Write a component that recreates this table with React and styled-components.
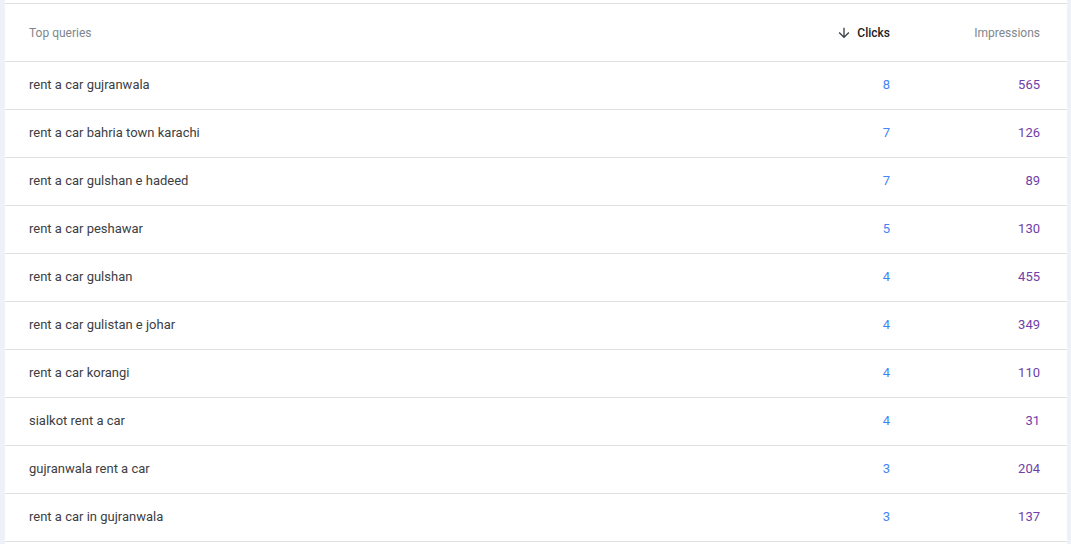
import styled, { createGlobalStyle } from 'styled-components';

const GlobalStyle = createGlobalStyle`
  html, body {
    margin: 0;
    padding: 0;
    background: #eef2f8;
  }
  body {
    font-family: Roboto, "Liberation Sans", Arial, sans-serif;
    -webkit-font-smoothing: antialiased;
  }
`;

const Page = styled.div`
  padding: 0 4px 0 5px;
  height: 544px;
  box-sizing: border-box;
`;

const Card = styled.div`
  background: #fff;
  padding-top: 3px;
  height: 100%;
  box-sizing: border-box;
`;

const Table = styled.div`
  border-top: 1px solid #e0e0e0;
`;

const Row = styled.div`
  display: grid;
  grid-template-columns: 1fr 130px 150px;
  align-items: center;
  height: ${(p) => (p.$head ? '57px' : '47px')};
  box-sizing: content-box;
  padding: 0 27px 0 24px;
  border-bottom: 1px solid #e0e0e0;
  font-size: 13px;
`;

const Cell = styled.div`
  padding-bottom: 2px;
  white-space: nowrap;
`;

const Query = styled(Cell)`
  color: #3c4043;
`;

const Num = styled(Cell)`
  text-align: right;
  color: ${(p) => p.$color};
`;

const HeadCell = styled.div`
  display: flex;
  align-items: center;
  justify-content: ${(p) => (p.$right ? 'flex-end' : 'flex-start')};
  gap: 5px;
  color: ${(p) => (p.$active ? '#202124' : '#80868b')};
  font-weight: ${(p) => (p.$active ? 500 : 400)};
  font-size: 12px;
`;

const ArrowDown = () => (
  <svg width="16" height="16" viewBox="0 0 24 24" fill="#3c4043">
    <path d="M20 12l-1.41-1.41L13 16.17V4h-2v12.17l-5.58-5.59L4 12l8 8 8-8z" />
  </svg>
);

const rows = [
  ['rent a car gujranwala', 8, 565],
  ['rent a car bahria town karachi', 7, 126],
  ['rent a car gulshan e hadeed', 7, 89],
  ['rent a car peshawar', 5, 130],
  ['rent a car gulshan', 4, 455],
  ['rent a car gulistan e johar', 4, 349],
  ['rent a car korangi', 4, 110],
  ['sialkot rent a car', 4, 31],
  ['gujranwala rent a car', 3, 204],
  ['rent a car in gujranwala', 3, 137],
];

export default function App() {
  return (
    <>
      <GlobalStyle />
      <Page>
        <Card>
          <Table>
            <Row $head>
              <HeadCell>Top queries</HeadCell>
              <HeadCell $right $active>
                <ArrowDown />
                Clicks
              </HeadCell>
              <HeadCell $right>Impressions</HeadCell>
            </Row>
            {rows.map(([q, c, i]) => (
              <Row key={q}>
                <Query>{q}</Query>
                <Num $color="#4285f4">{c}</Num>
                <Num $color="#7040a8">{i}</Num>
              </Row>
            ))}
          </Table>
        </Card>
      </Page>
    </>
  );
}
